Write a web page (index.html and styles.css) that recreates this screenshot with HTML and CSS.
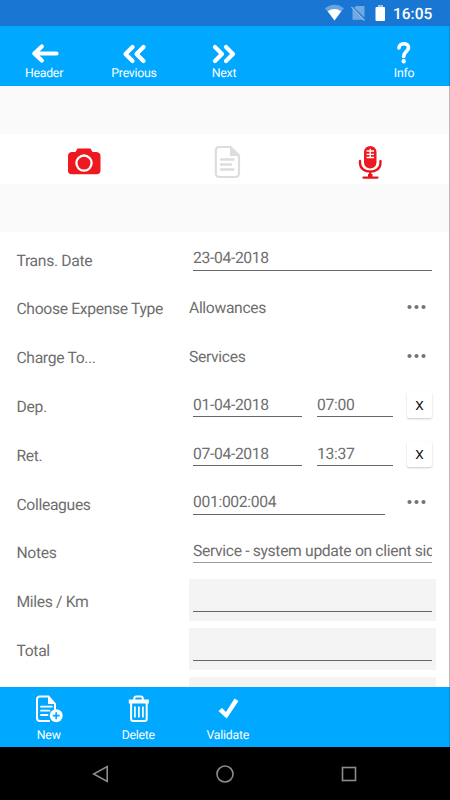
FILE: index.html
```html
<!DOCTYPE html>
<html lang="en">
<head>
<meta charset="utf-8">
<title>Expense</title>
<link rel="stylesheet" href="styles.css">
</head>
<body>
<div class="status">
  <svg class="status-icons" width="64" height="26" viewBox="0 0 64 26">
    <path d="M0 8.200Q9.500 1.500 19 8.200L9.500 20.500Z" fill="#fff" opacity=".35"/>
    <path d="M2.800 11.300Q9.500 6.800 16.200 11.300L9.500 20.500Z" fill="#fff"/>
    <path d="M31.500 6H39.500V17.500L29 7.500ZM27.500 9L38 19.800H27.500Z" fill="#fff" opacity=".38"/>
    <path d="M26.500 7L39.500 20.500" stroke="#fff" stroke-width="1.200" opacity=".5"/>
    <path d="M53 5h5v3h-5z" fill="#fff" opacity=".55"/>
    <rect x="50.500" y="7" width="9.500" height="14" rx="1" fill="#fff"/>
  </svg>
  <span class="clock">16:05</span>
</div>
<div class="app">
  <header class="bar top">
    <div class="item"><svg width="40" height="40" viewBox="0 0 40 40"><path d="M17.800 20.500L10.300 27.500L17.800 34.500M11 27.500H32.500" class="line"/></svg><span>Header</span></div>
    <div class="item"><svg width="40" height="40" viewBox="0 0 40 40"><path d="M18.500 21L11.500 28L18.500 35M29.500 21L22.500 28L29.500 35" class="line"/></svg><span>Previous</span></div>
    <div class="item"><svg width="40" height="40" viewBox="0 0 40 40"><path d="M11 21L18 28L11 35M22 21L29 28L22 35" class="line"/></svg><span>Next</span></div>
    <div class="item"></div>
    <div class="item"><svg width="40" height="40" viewBox="0 0 40 40"><path d="M15 21.800C15.500 16.300 24.500 16.500 24.500 21.800C24.500 25.500 19.700 25.500 19.700 30.500" class="line mark"/><circle cx="19.700" cy="35.300" r="2.200" fill="#fff"/></svg><span>Info</span></div>
  </header>
  <div class="band"></div>
  <div class="attachments">
    <svg width="34" height="34" viewBox="0 0 34 34"><path d="M4.500 6H8.500L10.500 2.500H23.500L25.500 6H29.500Q33.500 6.500 33.500 10V24.500Q33.500 28.300 29.500 28.300H4.500Q1 28.300 1 24.500V10Q1 6.500 4.500 6Z" fill="#ed1820"/><circle cx="17" cy="17.100" r="7.600" fill="none" stroke="#fff" stroke-width="2.300"/></svg>
    <svg width="34" height="34" viewBox="0 0 34 34"><path d="M9.500 1H20.500L29 9.500V27Q29 31 25.300 31H9.500Q5.800 31 5.800 27V5Q5.800 1 9.500 1Z" fill="none" stroke="#ddd" stroke-width="2.200"/><path d="M20 1L29 10H20Z" fill="#ddd"/><path d="M11 13.500H23.500M11 18.500H21M11 23.500H23.500" stroke="#ddd" stroke-width="2.400" stroke-linecap="round"/></svg>
    <svg width="34" height="34" viewBox="0 0 34 34"><rect x="11" y="0" width="12.500" height="22.500" rx="6.200" fill="#ed1820"/><path d="M13.500 5H21M13.500 8.300H21M13.500 11.500H21M17.200 2.800V11.500" stroke="#fff" stroke-width="1.300"/><path d="M7 15V17C7 28.500 27.500 28.500 27.500 17V15M17.200 25.500V31M10.500 31.600H24.500" fill="none" stroke="#e8141c" stroke-width="2.300" stroke-linecap="round"/><path d="M15 28H19.500V31H15Z" fill="#e8141c"/></svg>
  </div>
  <div class="band"></div>
  <main class="form">
    <div class="row"><label>Trans. Date</label><div class="field"><span class="input wide">23-04-2018</span></div></div>
    <div class="row"><label>Choose Expense Type</label><div class="field"><span class="value">Allowances</span><svg class="dots" width="20" height="6"><circle cx="2.500" cy="3" r="2.100"/><circle cx="9.500" cy="3" r="2.100"/><circle cx="16.500" cy="3" r="2.100"/></svg></div></div>
    <div class="row"><label>Charge To...</label><div class="field"><span class="value">Services</span><svg class="dots" width="20" height="6"><circle cx="2.500" cy="3" r="2.100"/><circle cx="9.500" cy="3" r="2.100"/><circle cx="16.500" cy="3" r="2.100"/></svg></div></div>
    <div class="row"><label>Dep.</label><div class="field"><span class="input date">01-04-2018</span><span class="input time">07:00</span><button class="clear">X</button></div></div>
    <div class="row"><label>Ret.</label><div class="field"><span class="input date">07-04-2018</span><span class="input time">13:37</span><button class="clear">X</button></div></div>
    <div class="row"><label>Colleagues</label><div class="field"><span class="input people">001:002:004</span><svg class="dots" width="20" height="6"><circle cx="2.500" cy="3" r="2.100"/><circle cx="9.500" cy="3" r="2.100"/><circle cx="16.500" cy="3" r="2.100"/></svg></div></div>
    <div class="row"><label>Notes</label><div class="field"><span class="input wide soft">Service - system update on client side</span></div></div>
    <div class="row"><label>Miles / Km</label><div class="field shaded"><span class="input wide"></span></div></div>
    <div class="row"><label>Total</label><div class="field shaded"><span class="input wide"></span></div></div>
    <div class="row"><label></label><div class="field shaded"></div></div>
  </main>
  <footer class="bar bottom">
    <div class="item"><svg width="40" height="40" viewBox="0 0 40 40"><path d="M26 23V17L19.500 9.500H11Q8 9.500 8 12.500V31Q8 34 11 34H21" fill="none" stroke="#fff" stroke-width="2"/><path d="M19 8.500L27 17H19Z" fill="#fff"/><path d="M12 19.700H23M12 23.700H20.500M12 28H18.500" stroke="#fff" stroke-width="1.800" stroke-linecap="round"/><circle cx="27.200" cy="28.700" r="6.500" fill="#fff"/><path d="M23.700 28.700H30.700M27.200 25.200V32.200" stroke="#00a8ff" stroke-width="1.700"/></svg><span>New</span></div>
    <div class="item"><svg width="40" height="40" viewBox="0 0 40 40"><path d="M16.300 13V11.500Q16.300 9.500 18.300 9.500H22.800Q24.800 9.500 24.800 11.500V13" fill="none" stroke="#fff" stroke-width="2"/><path d="M10.800 12.500H30.800V16.500H10.800Z" fill="#fff"/><path d="M13.100 16V32Q13.100 34 15.300 34H26.500Q28.700 34 28.700 32V16" fill="none" stroke="#fff" stroke-width="2"/><path d="M16.900 19.500V30.500M20.900 19.500V30.500M24.900 19.500V30.500" stroke="#fff" stroke-width="1.700"/></svg><span>Delete</span></div>
    <div class="item"><svg width="40" height="40" viewBox="0 0 40 40"><path d="M10.500 24L14 21L18 25L26.500 11.500L30.500 14L18.700 31.500Z" fill="#fff"/></svg><span>Validate</span></div>
  </footer>
</div>
<nav class="nav">
  <svg width="20" height="20" viewBox="0 0 20 20"><path d="M16.200 2.500V17.500L2.700 10Z"/></svg>
  <svg width="20" height="20" viewBox="0 0 20 20"><circle cx="10" cy="10" r="8"/></svg>
  <svg width="20" height="20" viewBox="0 0 20 20"><rect x="3.500" y="3.500" width="13" height="13"/></svg>
</nav>
</body>
</html>
```

FILE: styles.css
```css
* { box-sizing: border-box; }
body { margin: 0; width: 450px; height: 800px; overflow: hidden; background: #fff; font-family: Roboto, sans-serif; color: #6e6e6e; text-rendering: geometricPrecision; }
svg { display: block; flex: none; }
.status { display: flex; height: 26px; padding-left: 325px; background: #1976d2; color: #fff; }
.clock { margin-left: 4px; font-size: 15.5px; font-weight: 500; line-height: 28px; }
.app { display: flex; flex-direction: column; height: 721px; border-right: 1px solid rgba(0, 0, 0, .28); }
.bar { display: flex; flex: none; width: 450px; height: 60px; border-right: 1px solid rgba(0, 0, 0, .15); background: #00a8ff; color: #fff; font-size: 12.3px; line-height: 17px; letter-spacing: -.25px; }
.bar .item { display: flex; flex-direction: column; align-items: center; width: 90px; flex: none; }
.bar.top { margin-left: -1px; width: 451px; }
.bottom { padding-left: 4px; }
.bottom .item { width: 89.5px; line-height: 18px; }
.line { fill: none; stroke: #fff; stroke-width: 4.200; stroke-linecap: round; stroke-linejoin: round; }
.mark { stroke-width: 3.700; }
.band { flex: none; height: 48px; background: #fafafa; }
.attachments { display: flex; flex: none; height: 50px; padding: 12px 62px 0 67px; justify-content: space-between; }
.form { flex: 1; min-height: 0; overflow: hidden; padding-top: 4.100px; }
.row { display: flex; height: 48.780px; padding-left: 16.500px; font-size: 15.700px; line-height: 20px; letter-spacing: -.34px; }
label { width: 172.500px; flex: none; padding-top: 14.600px; }
.field { display: flex; width: 247px; height: 42px; margin-top: 1.700px; padding-left: 4px; }
.input { flex: none; height: 33px; padding-top: 10.700px; border-bottom: 1px solid #666; white-space: nowrap; overflow: hidden; }
.wide { width: 239px; }
.soft { border-bottom: 1px solid #999; }
.date { width: 109px; margin-right: 15px; }
.time { width: 76px; }
.people { width: 192px; }
.value { width: 218px; margin-left: -4px; padding-top: 11.500px; }
.dots { margin-top: 17.400px; fill: #757575; }
.people + .dots { margin-left: 22px; }
.shaded { background: #f4f4f4; }
.clear { width: 25px; height: 26px; margin: 8px 0 0 14px; padding: 0; border: 0; border-radius: 2px; background: #fff; box-shadow: 0 1px 2px rgba(0, 0, 0, .22); color: #111; font: 400 13.500px/27px Roboto, sans-serif; }
.nav { display: flex; justify-content: space-between; height: 53px; padding: 17px 91px 0 91px; background: #000; }
.nav svg { fill: none; stroke: #8c8c8c; stroke-width: 1.600; }
```
